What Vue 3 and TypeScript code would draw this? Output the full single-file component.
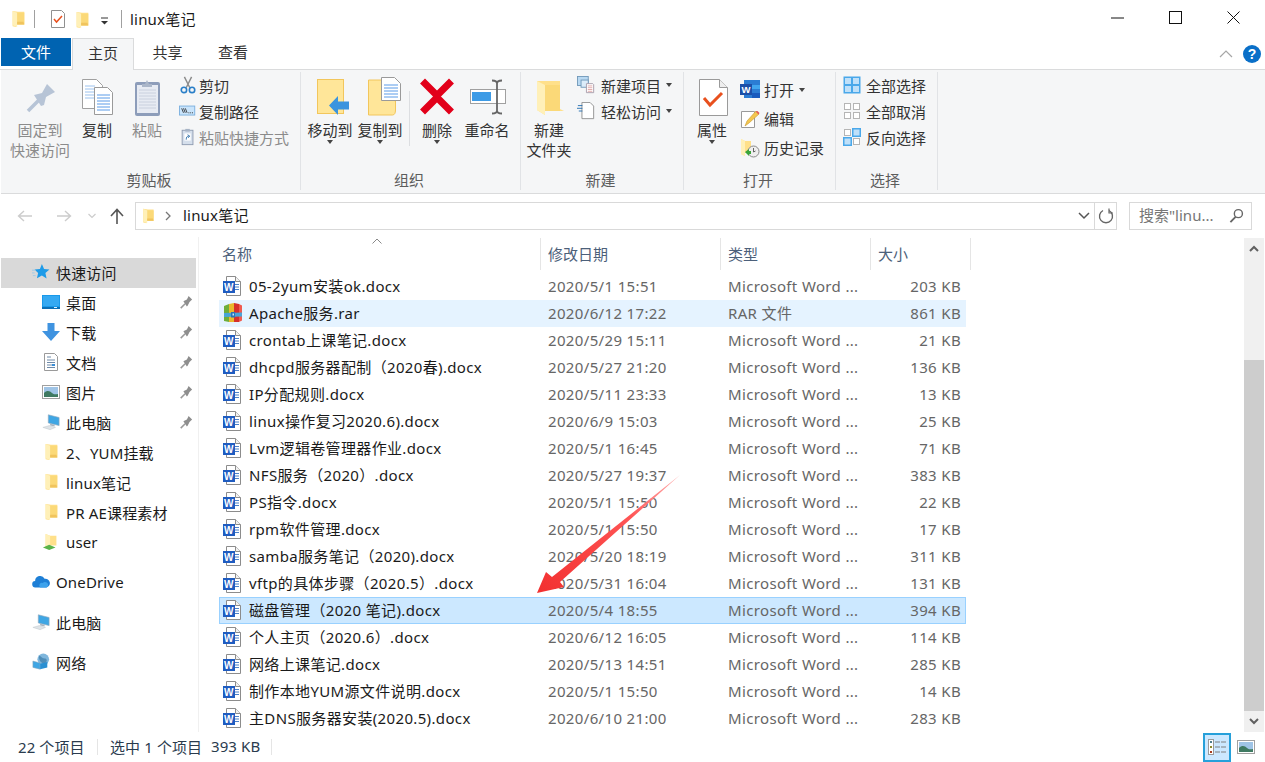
<script setup lang="ts">
interface FileRow { name: string; date: string; type: string; size: string; icon: string; cls?: string }
const W = 'Microsoft Word ...'
const raw: [string, string, string][] = [
  ['05-2yum安装ok.docx', '2020/5/1 15:51', '203 KB'],
  ['Apache服务.rar', '2020/6/12 17:22', '861 KB'],
  ['crontab上课笔记.docx', '2020/5/29 15:11', '21 KB'],
  ['dhcpd服务器配制（2020春).docx', '2020/5/27 21:20', '136 KB'],
  ['IP分配规则.docx', '2020/5/11 23:33', '13 KB'],
  ['linux操作复习2020.6).docx', '2020/6/9 15:03', '25 KB'],
  ['Lvm逻辑卷管理器作业.docx', '2020/5/1 16:45', '71 KB'],
  ['NFS服务（2020）.docx', '2020/5/27 19:37', '383 KB'],
  ['PS指令.docx', '2020/5/1 15:50', '22 KB'],
  ['rpm软件管理.docx', '2020/5/1 15:50', '17 KB'],
  ['samba服务笔记（2020).docx', '2020/5/20 18:19', '311 KB'],
  ['vftp的具体步骤（2020.5）.docx', '2020/5/31 16:04', '131 KB'],
  ['磁盘管理（2020 笔记).docx', '2020/5/4 18:55', '394 KB'],
  ['个人主页（2020.6）.docx', '2020/6/12 16:05', '114 KB'],
  ['网络上课笔记.docx', '2020/5/13 14:51', '285 KB'],
  ['制作本地YUM源文件说明.docx', '2020/5/1 15:50', '14 KB'],
  ['主DNS服务器安装(2020.5).docx', '2020/6/10 21:00', '283 KB'],
]
const files: FileRow[] = raw.map(([name, date, size], i) => ({
  name, date, size,
  type: i === 1 ? 'RAR 文件' : W,
  icon: i === 1 ? 'i-rar' : 'i-word-doc',
  cls: i === 1 ? 'hover' : i === 12 ? 'selected' : '',
}))
const quick = [
  { t: '桌面', i: 'i-desktop', pin: true },
  { t: '下载', i: 'i-down', pin: true },
  { t: '文档', i: 'i-docs', pin: true },
  { t: '图片', i: 'i-pic', pin: true },
  { t: '此电脑', i: 'i-pc', pin: true },
  { t: '2、YUM挂载', i: 'i-folder', pin: false },
  { t: 'linux笔记', i: 'i-folder', pin: false },
  { t: 'PR AE课程素材', i: 'i-folder', pin: false },
  { t: 'user', i: 'i-user', pin: false },
]
const roots = [
  { t: 'OneDrive', i: 'i-cloud' },
  { t: '此电脑', i: 'i-pc' },
  { t: '网络', i: 'i-net' },
]
</script>

<template>
  <div class="win">
    <svg class="defs" aria-hidden="true">
      <defs>
        <symbol id="i-folder" viewBox="0 0 20 20">
          <path d="M4 1l6 1 7 0v14H8v3l-4-1z" fill="#ffe08a" />
          <path d="M9 3h8v13H9z" fill="#fbd978" />
          <path d="M4 1l5 2v16l-5-2z" fill="#fff0b8" />
          <path d="M9 16h8l-1-3-7 0z" fill="#f0c45e" />
        </symbol>
        <symbol id="i-word-doc" viewBox="0 0 20 22">
          <path d="M3.500 1.500h9l5 5v14h-14z" fill="#fff" stroke="#8c8c8c" />
          <path d="M12.500 1.500v5h5" fill="#f2f2f2" stroke="#8c8c8c" />
          <path d="M12 9.500h4M12 12h4M12 14.500h4" stroke="#4c80c8" />
          <rect x="0" y="6" width="12" height="12" fill="#1f5cc0" />
          <text x="6" y="15.500" text-anchor="middle" font-size="10" font-weight="700" fill="#fff" font-family="Liberation Sans">W</text>
        </symbol>
        <symbol id="i-rar" viewBox="0 0 20 20">
          <path d="M1 3l5-2v18l-5-1z" fill="#6fae3a" />
          <path d="M6 1l5-1v19H6z" fill="#eab82e" />
          <path d="M11 0l5 1v18h-5z" fill="#d6302c" />
          <path d="M16 1l3 1.500v15L16 19z" fill="#f05a4e" />
          <path d="M1 10l18-.5v4L1 14z" fill="#48a4d8" />
          <rect x="8" y="9" width="4" height="5.500" fill="#2b75b8" />
          <rect x="9.500" y="10.500" width="1.500" height="2" fill="#cfe7f7" />
        </symbol>
        <symbol id="i-pin" viewBox="0 0 16 16">
          <path d="M2 15l5-5" stroke="#9a9a9a" stroke-width="1.800" />
          <path d="M5 7l4-2 2-4 4 4-3 3-2 4-1 1z" fill="#8e8e8e" />
        </symbol>
        <symbol id="i-star" viewBox="0 0 20 20">
          <path d="M11 1l2.400 5.600 6 .6-4.500 4 1.300 6-5.200-3.200L5.500 17l1.300-6-4-3.800 6-.5z" fill="#1e9be8" />
          <path d="M0 8h4M0 11h3M1 14h3" stroke="#9ccbe9" />
        </symbol>
        <symbol id="i-desktop" viewBox="0 0 18 14">
          <rect x="0" y="0" width="18" height="13" fill="#1899ea" />
          <rect x="1" y="1" width="16" height="10" fill="#35a9f2" />
          <rect x="0" y="12" width="18" height="2" fill="#0b6fb6" />
          <rect x="12" y="12" width="3" height="1" fill="#d7f0ff" />
        </symbol>
        <symbol id="i-down" viewBox="0 0 18 18">
          <path d="M5.500 0h7v8H18l-9 10L0 8h5.500z" fill="#3f93e0" />
        </symbol>
        <symbol id="i-docs" viewBox="0 0 18 18">
          <path d="M2.500 .5h10l3 3v14h-13z" fill="#fff" stroke="#9a9a9a" />
          <path d="M5 4h4M5 7h8M5 9.500h8M5 12h5M5 14.500h8" stroke="#6f8aa8" />
          <rect x="10" y="11" width="3" height="2" fill="#3a8fd8" />
        </symbol>
        <symbol id="i-pic" viewBox="0 0 18 14">
          <rect x=".5" y=".5" width="17" height="13" fill="#fff" stroke="#a0a0a0" />
          <rect x="2" y="2" width="14" height="10" fill="#9fc4e6" />
          <path d="M2 8c3-3 6-2 8 0s4 1 6 1v3H2z" fill="#3f7a62" />
        </symbol>
        <symbol id="i-pc" viewBox="0 0 20 18">
          <path d="M7 1l12 3v9L7 10z" fill="#3fa6e4" stroke="#8fa9bc" stroke-width=".7" />
          <path d="M9 11l5 1v2l-5-1z" fill="#a8b4bf" />
          <path d="M1 15l7-2 7 2-6 2.500z" fill="#dfe4e8" stroke="#bcc4ca" stroke-width=".5" />
        </symbol>
        <symbol id="i-user" viewBox="0 0 20 20">
          <path d="M4 1l5 2h7v11H9v3l-5-2z" fill="#ffe08a" />
          <path d="M4 1l5 2v14l-5-2z" fill="#fff0b8" />
          <path d="M1 16l7-3 7 3-7 3z" fill="#5ab348" />
        </symbol>
        <symbol id="i-cloud" viewBox="0 0 20 14">
          <path d="M4 13a3.500 3.500 0 01-.5-7A5.500 5.500 0 0114 3.500 4.500 4.500 0 0116 13z" fill="#1e7fd6" />
          <path d="M9 13a3 3 0 013-5c2-2 6-.5 6 2.500a2.500 2.500 0 01-2 2.500z" fill="#3da2ec" />
        </symbol>
        <symbol id="i-net" viewBox="0 0 20 20">
          <circle cx="12.500" cy="7" r="6.500" fill="#7fb6dc" />
          <path d="M8 3c3 1 3 3 6 3s3 3 1 5-4 0-5-1-3-4-2-7z" fill="#4f8db8" />
          <path d="M1 9l8 2v7l-8-2z" fill="#3fa6e4" stroke="#8fa9bc" stroke-width=".6" />
          <path d="M9 12l8-2v6l-8 2z" fill="#2a8fd2" />
        </symbol>
        <symbol id="i-s-cut" viewBox="0 0 20 20">
          <path d="M6 1l6 12M14 1L8 13" stroke="#8c8c8c" stroke-width="1.600" fill="none" />
          <circle cx="5.500" cy="15.500" r="3" fill="none" stroke="#2a7fc8" stroke-width="1.800" />
          <circle cx="14.500" cy="15.500" r="3" fill="none" stroke="#2a7fc8" stroke-width="1.800" />
        </symbol>
        <symbol id="i-s-path" viewBox="0 0 20 20">
          <rect x=".5" y="4.500" width="17" height="10" fill="#c9e4fb" stroke="#78aede" />
          <path d="M3 7l2 5M5 7l2 5M7 7l2 5" stroke="#222" stroke-width=".9" />
          <path d="M10.500 12h1M12.500 12h1M14.500 12h1" stroke="#222" />
        </symbol>
        <symbol id="i-s-short" viewBox="0 0 20 20">
          <rect x="3.500" y="2.500" width="12" height="16" fill="#d5dfec" stroke="#8c9ab0" />
          <rect x="7" y="1" width="5" height="3" fill="#a7b4c6" />
          <rect x="6" y="6" width="7" height="8" fill="#fff" />
          <path d="M8 13c0-3 1-4 3-4M9.500 7.500L12 9l-2 2" stroke="#2d6ea8" fill="none" />
        </symbol>
        <symbol id="i-s-new" viewBox="0 0 20 20">
          <rect x=".5" y=".5" width="12" height="10" fill="#b9d9f2" stroke="#6f97b8" />
          <rect x="4.500" y="4.500" width="8" height="8" fill="#dcecf9" stroke="#6f97b8" />
          <path d="M10.500 8.500h7l1 1v9h-8z" fill="#fff" stroke="#a59aa8" />
          <path d="M12 11h5M12 13h5M12 15h5M12 17h5" stroke="#d98f8f" stroke-width=".8" />
        </symbol>
        <symbol id="i-s-easy" viewBox="0 0 20 20">
          <path d="M5.500 .5h9l4 4v14h-13z" fill="#fff" stroke="#8c8c8c" />
          <path d="M1 4h5M0 7h6M2 10h4" stroke="#1f6cb0" />
        </symbol>
        <symbol id="i-s-word" viewBox="0 0 20 20">
          <rect x="4" y="0" width="16" height="18" fill="#2b7cd3" />
          <rect x="12" y="5" width="8" height="4" fill="#41a5ee" />
          <rect x="12" y="13" width="8" height="5" fill="#185abd" />
          <rect x="0" y="4" width="12" height="11" fill="#1b4fa8" />
          <text x="6" y="13" text-anchor="middle" font-size="9.500" font-weight="700" fill="#fff" font-family="Liberation Sans">W</text>
        </symbol>
        <symbol id="i-s-edit" viewBox="0 0 20 20">
          <path d="M1.500 2.500h13v16h-13z" fill="#fff" stroke="#9a9a9a" />
          <path d="M5 17l2-5L16 2l3 3-10 9z" fill="#f4c64f" stroke="#c69a32" stroke-width=".6" />
          <path d="M15.500 2.500l3 3 1-1.500-2-2z" fill="#e25a5a" />
        </symbol>
        <symbol id="i-s-hist" viewBox="0 0 20 20">
          <path d="M1 1l4 2h6v12H5v3l-4-2z" fill="#ffe08a" />
          <path d="M1 1l4 2v15l-4-2z" fill="#fff0b8" />
          <circle cx="13.500" cy="13.500" r="5.500" fill="#eee" stroke="#888" />
          <path d="M13.500 10v4l2-1" stroke="#666" fill="none" />
          <path d="M5 14l4-3v2h2v3H9v2z" fill="#3aa43a" />
        </symbol>
        <symbol id="i-s-all" viewBox="0 0 18 18">
          <rect x=".5" y=".5" width="17" height="17" fill="#4aa8ea" />
          <rect x="2" y="2" width="6" height="6" fill="#bfe0f9" /><rect x="10" y="2" width="6" height="6" fill="#bfe0f9" />
          <rect x="2" y="10" width="6" height="6" fill="#bfe0f9" /><rect x="10" y="10" width="6" height="6" fill="#bfe0f9" />
        </symbol>
        <symbol id="i-s-none" viewBox="0 0 18 18">
          <g fill="#fff" stroke="#b5b5b5"><rect x="1.500" y="1.500" width="6" height="6" /><rect x="10.500" y="1.500" width="6" height="6" /><rect x="1.500" y="10.500" width="6" height="6" /><rect x="10.500" y="10.500" width="6" height="6" /></g>
        </symbol>
        <symbol id="i-s-inv" viewBox="0 0 18 18">
          <g fill="#fff" stroke="#b5b5b5"><rect x="1.500" y="1.500" width="6" height="6" /><rect x="10.500" y="10.500" width="6" height="6" /></g>
          <g fill="#bfe0f9" stroke="#4aa8ea" stroke-width="1.500"><rect x="9.750" y=".75" width="7.500" height="7.500" /><rect x=".75" y="9.750" width="7.500" height="7.500" /></g>
        </symbol>
      </defs>
    </svg>

    <!-- title bar -->
    <header class="titlebar">
      <svg class="qa folder1"><use href="#i-folder" /></svg>
      <i class="tsep s1"></i>
      <svg class="qa check" viewBox="0 0 16 18" width="16" height="18">
        <path d="M1.500 .5h10l3 3v14h-13z" fill="#fff" stroke="#909090" />
        <path d="M4 9l2.500 3L12 6" stroke="#e8501e" stroke-width="1.500" fill="none" />
      </svg>
      <svg class="qa folder2"><use href="#i-folder" /></svg>
      <svg class="qa drop" viewBox="0 0 8 8" width="8" height="8"><path d="M0 1h7" stroke="#333" /><path d="M0 4h7L3.500 7.500z" fill="#333" /></svg>
      <i class="tsep s2"></i>
      <span class="title">linux笔记</span>
      <div class="winctl">
        <svg viewBox="0 0 58 20" width="58" height="20"><path d="M0 10h13" stroke="#111" /></svg>
        <svg viewBox="0 0 58 20" width="58" height="20"><rect x=".5" y="3.500" width="12" height="12" fill="none" stroke="#111" /></svg>
        <svg viewBox="0 0 20 20" width="20" height="20"><path d="M.5 3.500l12 12M12.500 3.500l-12 12" stroke="#111" /></svg>
      </div>
    </header>

    <!-- tabs -->
    <nav class="tabs">
      <span class="tab file">文件</span>
      <span class="tab home">主页</span>
      <span class="tab share">共享</span>
      <span class="tab view">查看</span>
      <div class="tabs-right">
        <svg viewBox="0 0 14 8" width="14" height="8"><path d="M1 7l6-6 6 6" fill="none" stroke="#a6a6a6" stroke-width="1.200" /></svg>
        <span class="help">?</span>
      </div>
    </nav>

    <!-- ribbon -->
    <section class="ribbon">
      <div class="group g1">
        <div class="body">
          <div class="big w78 off">
            <svg class="bi" viewBox="0 0 44 44"><path d="M10 35l11-11" stroke="#b7c4d6" stroke-width="3.500" /><path d="M16 19l8-2 5-9 8 8-9 5-2 8-3 1z" fill="#b7c4d6" /></svg>
            <span>固定到</span><span>快速访问</span>
          </div>
          <div class="big w36">
            <svg class="bi" viewBox="0 0 44 44">
              <path d="M7.500 3.500h14l6 6v23h-20z" fill="#fff" stroke="#a0a0a0" />
              <path d="M10 10h10M10 13h15M10 16h15M10 19h15M10 22h15" stroke="#9cc2ee" />
              <path d="M19.500 11.500h13l5 5v22h-18z" fill="#fff" stroke="#9a9a9a" />
              <path d="M22 19h13M22 22h13M22 25h13M22 28h13M22 31h13M22 34h13" stroke="#5b9be8" />
            </svg>
            <span>复制</span>
          </div>
          <div class="big w64 off">
            <svg class="bi" viewBox="0 0 44 44">
              <rect x="10" y="6" width="25" height="34" rx="2" fill="#8d9dba" />
              <rect x="12" y="9" width="21" height="28" fill="#e7ebf3" />
              <path d="M14 14h17M14 17h17M14 20h17M14 23h17M14 26h17M14 29h17M14 32h17" stroke="#c9d0de" />
              <path d="M17 8h3l2-4 2 4h3v3H17z" fill="#aab6c9" />
            </svg>
            <span>粘贴</span>
          </div>
          <div class="smalls">
            <div class="small"><svg class="si"><use href="#i-s-cut" /></svg>剪切</div>
            <div class="small"><svg class="si"><use href="#i-s-path" /></svg>复制路径</div>
            <div class="small off"><svg class="si"><use href="#i-s-short" /></svg>粘贴快捷方式</div>
          </div>
        </div>
        <div class="glabel">剪贴板</div>
      </div>

      <div class="group g2">
        <div class="body">
          <div class="big w58">
            <svg class="bi" viewBox="0 0 44 44">
              <rect x="9.500" y="3.500" width="26" height="34" fill="#ffe699" stroke="#f2c65c" />
              <path d="M21 29.500L30 20v5.500h11v8H30V39z" fill="#3b94de" />
            </svg>
            <span>移动到</span><b class="caret"></b>
          </div>
          <div class="big w42">
            <svg class="bi" viewBox="0 0 44 44">
              <path d="M10.500 4h27v30c0 3-1 5-3 5h-24z" fill="#ffe699" stroke="#f2c65c" />
              <path d="M33 22c3 0 4.500 1 4.500 4" stroke="#f2c65c" fill="#ffd870" />
              <path d="M23.500 1.500h13l6 6v17h-19z" fill="#fff" stroke="#9a9a9a" />
              <path d="M26 9h14M26 12h14M26 15h14M26 18h14M26 21h14" stroke="#5b9be8" />
            </svg>
            <span>复制到</span><b class="caret"></b>
          </div>
          <i class="gsep"></i>
          <div class="big w54">
            <svg class="bi" viewBox="0 0 44 44"><path d="M10 8l12 12L34 8M10 34l12-12 12 12" transform="translate(0,-.5)" fill="none" stroke="#e2001a" stroke-width="7" stroke-linecap="square" /></svg>
            <span>删除</span><b class="caret"></b>
          </div>
          <div class="big w46">
            <svg class="bi" viewBox="0 0 44 44">
              <rect x="5.500" y="13.500" width="35" height="14" fill="#fff" stroke="#a0a0a0" />
              <rect x="7" y="16" width="19" height="9" fill="#3d9be6" />
              <path d="M32 6v30M27 4.500c3 0 5 1 5 3 0-2 2-3 5-3M27 37.500c3 0 5-1 5-3 0 2 2 3 5 3" fill="none" stroke="#666" stroke-width="1.800" />
            </svg>
            <span>重命名</span>
          </div>
        </div>
        <div class="glabel">组织</div>
      </div>

      <div class="group g3">
        <div class="body">
          <div class="big w56n">
            <svg class="bi" viewBox="0 0 44 44">
              <path d="M10 5h23v28l4 2H18v4l-8-5z" fill="#ffe08a" />
              <path d="M18 9h15v26H18z" fill="#fbd978" />
              <path d="M10 5l8 4v30l-8-5z" fill="#fff0b8" />
            </svg>
            <span>新建</span><span>文件夹</span>
          </div>
          <div class="smalls">
            <div class="small"><svg class="si sl"><use href="#i-s-new" /></svg>新建项目<b class="caret in"></b></div>
            <div class="small"><svg class="si sl"><use href="#i-s-easy" /></svg>轻松访问<b class="caret in"></b></div>
          </div>
        </div>
        <div class="glabel">新建</div>
      </div>

      <div class="group g4">
        <div class="body">
          <div class="big w56n">
            <svg class="bi" viewBox="0 0 44 44">
              <path d="M9.500 3.500h20l8 8v28h-28z" fill="#fff" stroke="#9a9a9a" />
              <path d="M29.500 3.500v8h8" fill="#eee" stroke="#9a9a9a" />
              <path d="M14 22l6 7 12-12" fill="none" stroke="#e8501e" stroke-width="3" />
            </svg>
            <span>属性</span><b class="caret"></b>
          </div>
          <div class="smalls tall">
            <div class="small"><svg class="si sw"><use href="#i-s-word" /></svg>打开<b class="caret in"></b></div>
            <div class="small"><svg class="si sw"><use href="#i-s-edit" /></svg>编辑</div>
            <div class="small"><svg class="si sw"><use href="#i-s-hist" /></svg>历史记录</div>
          </div>
        </div>
        <div class="glabel">打开</div>
      </div>

      <div class="group g5">
        <div class="body">
          <div class="smalls sel">
            <div class="small"><svg class="si ss"><use href="#i-s-all" /></svg>全部选择</div>
            <div class="small"><svg class="si ss"><use href="#i-s-none" /></svg>全部取消</div>
            <div class="small"><svg class="si ss"><use href="#i-s-inv" /></svg>反向选择</div>
          </div>
        </div>
        <div class="glabel">选择</div>
      </div>
    </section>

    <!-- address row -->
    <section class="addr">
      <div class="navs">
        <svg viewBox="0 0 16 12" width="16" height="12"><path d="M15 6H2M7 1L1.500 6 7 11" fill="none" stroke="#ccc" stroke-width="1.400" /></svg>
        <svg viewBox="0 0 16 12" width="16" height="12"><path d="M1 6h13M9 1l5.500 5L9 11" fill="none" stroke="#ccc" stroke-width="1.400" /></svg>
        <svg viewBox="0 0 8 6" width="8" height="6"><path d="M.5 1L4 4.500 7.500 1" fill="none" stroke="#ccc" stroke-width="1.200" /></svg>
        <svg viewBox="0 0 14 16" width="14" height="16"><path d="M7 16V2M1 8l6-6.500L13 8" fill="none" stroke="#555" stroke-width="1.600" /></svg>
      </div>
      <div class="pathbox">
        <svg class="pf"><use href="#i-folder" /></svg>
        <svg class="chev" viewBox="0 0 6 10" width="6" height="10"><path d="M1 1l4 4-4 4" fill="none" stroke="#777" stroke-width="1.300" /></svg>
        <span class="crumb">linux笔记</span>
        <svg class="dd" viewBox="0 0 12 8" width="12" height="8"><path d="M1 1l5 5 5-5" fill="none" stroke="#555" stroke-width="1.500" /></svg>
        <span class="refresh">
          <svg viewBox="0 0 16 16" width="16" height="16"><path d="M5 2.500a6.500 6.500 0 106 0" fill="none" stroke="#666" stroke-width="1.400" /><path d="M11 .5v4.500h4" fill="none" stroke="#666" stroke-width="1.200" /></svg>
        </span>
      </div>
      <div class="searchbox">
        <span>搜索"linu...</span>
        <svg viewBox="0 0 16 16" width="15" height="15"><circle cx="10" cy="6" r="4.300" fill="none" stroke="#666" stroke-width="1.500" /><path d="M7 9.500L1.500 15" stroke="#666" stroke-width="2" /></svg>
      </div>
    </section>

    <!-- main -->
    <main class="main">
      <aside class="side">
        <div class="sitem top active"><svg class="sic"><use href="#i-star" /></svg>快速访问</div>
        <div v-for="q in quick" :key="q.t + q.i" class="sitem sub">
          <svg class="sic" :class="q.i"><use :href="'#' + q.i" /></svg>{{ q.t }}
          <svg v-if="q.pin" class="pin"><use href="#i-pin" /></svg>
        </div>
        <div v-for="r in roots" :key="r.t" class="sitem top root"><svg class="sic"><use :href="'#' + r.i" /></svg>{{ r.t }}</div>
      </aside>

      <div class="content">
        <div class="thead">
          <span class="th c-name">名称<svg class="sort" viewBox="0 0 10 6" width="10" height="6"><path d="M.5 5.500L5 1l4.500 4.500" fill="none" stroke="#888" /></svg></span>
          <span class="th c-date">修改日期</span>
          <span class="th c-type">类型</span>
          <span class="th c-size">大小</span>
        </div>
        <div class="rows">
          <div v-for="f in files" :key="f.name" class="row" :class="f.cls">
            <span class="cell c-name name"><svg class="fic"><use :href="'#' + f.icon" /></svg>{{ f.name }}</span>
            <span class="cell c-date">{{ f.date }}</span>
            <span class="cell c-type">{{ f.type }}</span>
            <span class="cell c-size num">{{ f.size }}</span>
          </div>
        </div>
      </div>

      <div class="scroll">
        <div class="sb-btn"><svg viewBox="0 0 10 7" width="10" height="7"><path d="M1 6l4-4 4 4" fill="none" stroke="#606060" stroke-width="2" /></svg></div>
        <div class="sb-track"><div class="sb-thumb"></div></div>
        <div class="sb-btn"><svg viewBox="0 0 10 7" width="10" height="7"><path d="M1 1l4 4 4-4" fill="none" stroke="#606060" stroke-width="2" /></svg></div>
      </div>
    </main>

    <!-- status -->
    <footer class="status">
      <span class="st a">22 个项目</span>
      <i class="stsep"></i>
      <span class="st b">选中 1 个项目</span>
      <span class="st c">393 KB</span>
      <i class="stsep"></i>
      <div class="views">
        <span class="vbtn on">
          <svg viewBox="0 0 20 20" width="20" height="20">
            <rect x="1.500" y="2.500" width="5" height="15" fill="#fff" stroke="#9a9a9a" />
            <rect x="3" y="4" width="2" height="2" fill="#4f7d8c" /><rect x="3" y="9" width="2" height="2" fill="#8a8a2e" /><rect x="3" y="14" width="2" height="2" fill="#a83c1e" />
            <path d="M8 5h5M14 5h5M8 10h5M14 10h5M8 15h5M14 15h5" stroke="#808080" />
          </svg>
        </span>
        <span class="vbtn big2">
          <svg viewBox="0 0 18 14" width="18" height="14"><use href="#i-pic" /></svg>
        </span>
      </div>
    </footer>

    <!-- annotation arrow drawn over the window -->
    <svg class="arrow" viewBox="0 0 150 125" width="150" height="125">
      <defs>
        <linearGradient id="arrowFill" x1="100%" y1="0%" x2="0%" y2="100%">
          <stop offset="0" stop-color="#ffb0b0" />
          <stop offset=".35" stop-color="#f55" />
          <stop offset="1" stop-color="#f23030" />
        </linearGradient>
      </defs>
      <path d="M144 2L24 109l4 5L1 120 10 99l6 5z" fill="url(#arrowFill)" />
    </svg>
  </div>
</template>

<style>
html, body { margin: 0; background: #fff; }
</style>

<style scoped>
.win {
  position: relative;
  width: 1265px;
  height: 762px;
  overflow: hidden;
  display: flex;
  flex-direction: column;
  background: #fff;
  color: #1a1a1a;
  font-family: "Noto Sans", "Noto Sans CJK SC", sans-serif;
  font-size: 15px;
}
.defs { position: absolute; width: 0; height: 0; }

/* title */
.titlebar { height: 38px; display: flex; align-items: center; padding-left: 9px; flex: none; }
.qa { flex: none; }
.folder1, .folder2 { width: 18px; height: 18px; }
.folder1 { margin-top: -1px; }
.tsep { width: 1px; height: 18px; background: #a0a0a0; flex: none; }
.s1 { margin-left: 7px; margin-right: 15px; }
.check { margin-right: 7px; }
.folder2 { margin-right: 10px; margin-top: 1px; }
.drop { margin-right: 12px; margin-top: 4px; }
.s2 { margin-right: 8px; }
.title { font-size: 15px; margin-top: -1px; letter-spacing: .2px; }
.winctl { margin-left: auto; display: flex; padding-right: 18px; margin-top: -2px; }

/* tabs */
.tabs { height: 32px; display: flex; flex: none; padding-left: 1px; position: relative; border-bottom: 1px solid #dadbdc; box-sizing: border-box; }
.tab { text-align: center; line-height: 28px; font-size: 15px; color: #333; height: 28px; }
.tab.file { width: 70px; background: #0063b1; color: #fff; }
.tab.home { width: 62px; height: 32px; box-sizing: border-box; border: 1px solid #dadbdc; border-bottom: none; background: #f5f6f7; margin-left: 1px; line-height: 28px; }
.tab.share { width: 67px; }
.tab.view { width: 64px; }
.tabs-right { margin-left: auto; display: flex; align-items: center; gap: 10px; padding-right: 4px; height: 28px; margin-top: 2px; }
.help { width: 18px; height: 18px; border-radius: 50%; background: #0a6fc8; color: #fff; font: 700 14px/18px "Liberation Sans", sans-serif; text-align: center; }

/* ribbon */
.ribbon { height: 124px; flex: none; display: flex; background: #f5f6f7; border-bottom: 1px solid #dadbdc; box-sizing: border-box; margin-left: 1px; padding-top: 2px; padding-bottom: 3px; }
.group { display: flex; flex-direction: column; border-right: 1px solid #e1e3e6; box-sizing: border-box; }
.g1 { width: 300px; }
.g2 { width: 220px; }
.g3 { width: 163px; }
.g4 { width: 152px; }
.g5 { width: 102px; }
.body { flex: 1; display: flex; min-height: 0; position: relative; }
.glabel { height: 20px; line-height: 20px; text-align: center; color: #5c5c5c; font-size: 15px; flex: none; padding-right: 3px; }
.big { display: flex; flex-direction: column; align-items: center; padding-top: 4px; flex: none; line-height: 20px; color: #333; font-size: 15px; position: relative; white-space: nowrap; }
.big.off { color: #8b8b8b; }
.bi { width: 44px; height: 44px; flex: none; }
.w78 { width: 78px; }
.w36 { width: 36px; }
.w64 { width: 64px; }
.w58 { width: 58px; }
.w42 { width: 42px; }
.w54 { width: 54px; }
.w46 { width: 46px; }
.w56n { width: 56px; }
.caret { display: block; width: 0; height: 0; border-left: 3.5px solid transparent; border-right: 3.5px solid transparent; border-top: 4px solid #444; margin-top: 0; }
.caret.in { display: inline-block; margin-left: 5px; vertical-align: 2px; }
.gsep { width: 1px; height: 55px; background: #dcdee1; margin-top: 19px; margin-left: 8px; flex: none; }
.smalls { display: flex; flex-direction: column; padding-top: 0; }
.small { height: 26px; display: flex; align-items: center; white-space: nowrap; color: #333; font-size: 15px; }
.small.off { color: #8b8b8b; }
.si { width: 18px; height: 18px; margin-right: 2px; flex: none; }
.sl { margin-right: 6px; }
.tall { padding-top: 3px; }
.tall .small { height: 29px; }
.sw { width: 20px; height: 20px; margin-right: 4px; }
.sel { padding-left: 7px; }
.ss { margin-right: 5px; }

/* address */
.addr { height: 43px; display: flex; align-items: center; flex: none; padding-top: 0; box-sizing: border-box; }
.navs { width: 135px; display: flex; align-items: center; padding-left: 17px; gap: 23px; box-sizing: border-box; flex: none; }
.navs svg:nth-child(3) { margin-left: -7px; }
.navs svg:nth-child(4) { margin-left: -9px; }
.pathbox { width: 982px; height: 28px; box-sizing: border-box; border: 1px solid #d9d9d9; display: flex; align-items: center; flex: none; padding-left: 4px; }
.pf { width: 16px; height: 18px; }
.chev { margin-left: 9px; }
.crumb { margin-left: 12px; margin-top: -3px; letter-spacing: .2px; }
.dd { margin-left: auto; margin-right: 2px; }
.refresh { width: 21px; height: 100%; border-left: 1px solid #d9d9d9; margin-left: 2px; display: flex; align-items: center; justify-content: center; }
.searchbox { width: 123px; height: 28px; box-sizing: border-box; border: 1px solid #d9d9d9; margin-left: 12px; display: flex; align-items: center; justify-content: space-between; padding: 0 7px 0 9px; color: #767676; font-size: 15px; flex: none; white-space: nowrap; }
.searchbox span { margin-top: -2px; }

/* main */
.main { flex: 1; min-height: 0; display: flex; }
.side { width: 199px; box-sizing: border-box; border-right: 1px solid #f0f0f0; padding-top: 21px; flex: none; }
.sitem { height: 30px; display: flex; align-items: center; position: relative; white-space: nowrap; width: 195px; margin-left: 1px; color: #1a1a1a; letter-spacing: .15px; padding-bottom: 2px; box-sizing: border-box; }
.sitem.active { background: #d9d9d9; }
.sitem.top { padding-left: 31px; }
.sitem.sub { padding-left: 41px; }
.sitem.root { margin-top: 10px; }
.sic { width: 18px; height: 18px; margin-right: 6px; flex: none; }
.pin { width: 14px; height: 14px; position: absolute; right: 3px; top: 7px; }
.content { width: 1045px; flex: none; padding-left: 15px; padding-top: 1px; box-sizing: border-box; }
.thead { display: flex; height: 32px; margin-left: 0; }
.th { display: flex; align-items: center; border-right: 1px solid #e5e5e5; box-sizing: border-box; padding-left: 7px; padding-bottom: 2px; color: #4c607a; position: relative; height: 32px; }
.thead .c-name { width: 327px; padding-left: 8px; margin-right: 0; }
.thead .c-date { width: 180px; }
.thead .c-type { width: 150px; }
.thead .c-size { width: 100px; }
.sort { position: absolute; left: 158px; top: 0; }
.rows { padding-top: 3px; padding-left: 5px; }
.row { display: flex; height: 27px; width: 747px; align-items: center; box-sizing: border-box; white-space: nowrap; letter-spacing: .35px; }
.row.hover { background: #e5f3ff; }
.row.selected { background: #cce8ff; outline: 1px solid #99d1ff; outline-offset: -1px; }
.cell { color: #666; display: block; padding-bottom: 2px; }
.row .c-name { width: 322px; color: #1a1a1a; display: flex; align-items: center; padding-left: 4px; box-sizing: border-box; }
.row .c-date { width: 180px; padding-left: 7px; box-sizing: border-box; }
.row .c-type { width: 150px; padding-left: 7px; box-sizing: border-box; }
.row .c-size { width: 95px; text-align: right; padding-right: 5px; box-sizing: border-box; }
.fic { width: 20px; height: 22px; margin-right: 6px; flex: none; }
.scroll { width: 20px; flex: none; display: flex; flex-direction: column; background: #f0f0f0; margin-top: 1px; }
.sb-btn { height: 21px; display: flex; align-items: center; justify-content: center; flex: none; }
.sb-track { flex: 1; display: flex; flex-direction: column; justify-content: flex-end; }
.sb-thumb { height: 351px; background: #cdcdcd; }

/* status */
.status { height: 30px; flex: none; display: flex; align-items: center; color: #2a3b4e; position: relative; padding-left: 18px; font-size: 15px; letter-spacing: .1px; }
.st { white-space: nowrap; padding-bottom: 2px; }
.a { width: 79px; }
.b { margin-left: 12px; width: 101px; }
.c { width: 60px; }
.stsep { width: 1px; height: 16px; background: #e5e5e5; }
.views { margin-left: auto; display: flex; align-items: center; gap: 5px; padding-right: 9px; height: 30px; }
.vbtn { width: 28px; height: 29px; display: flex; align-items: center; justify-content: center; box-sizing: border-box; }
.vbtn.big2 { width: 20px; }
.vbtn.on { background: #cce8ff; border: 2px solid #26a0da; }
.arrow { position: absolute; left: 536px; top: 473px; pointer-events: none; }
</style>
